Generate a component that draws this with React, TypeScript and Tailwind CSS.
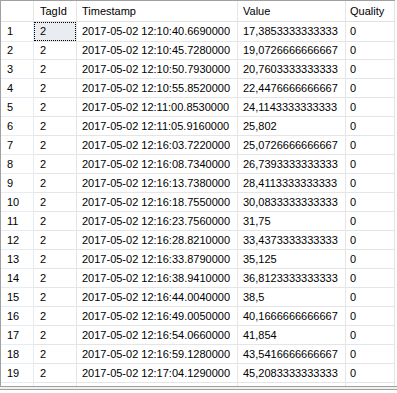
import React from "react";

const rows: [string, string][] = [
  ["12:10:40.6690000", "17,3853333333333"],
  ["12:10:45.7280000", "19,0726666666667"],
  ["12:10:50.7930000", "20,7603333333333"],
  ["12:10:55.8520000", "22,4476666666667"],
  ["12:11:00.8530000", "24,1143333333333"],
  ["12:11:05.9160000", "25,802"],
  ["12:16:03.7220000", "25,0726666666667"],
  ["12:16:08.7340000", "26,7393333333333"],
  ["12:16:13.7380000", "28,4113333333333"],
  ["12:16:18.7550000", "30,0833333333333"],
  ["12:16:23.7560000", "31,75"],
  ["12:16:28.8210000", "33,4373333333333"],
  ["12:16:33.8790000", "35,125"],
  ["12:16:38.9410000", "36,8123333333333"],
  ["12:16:44.0040000", "38,5"],
  ["12:16:49.0050000", "40,1666666666667"],
  ["12:16:54.0660000", "41,854"],
  ["12:16:59.1280000", "43,5416666666667"],
  ["12:17:04.1290000", "45,2083333333333"],
  ["12:17:09.1920000", "46,8753333333333"],
];

const cols = "grid grid-cols-[33px_43px_161px_108px_49px]";

export default function App() {
  return (
    <div
      className="w-[397px] h-[393px] bg-white overflow-hidden text-[11px] text-black"
      style={{ fontFamily: '"Liberation Sans", Arial, sans-serif' }}
    >
      <div className="h-[386px] overflow-hidden border-l border-t border-[#a0a0a0] w-[395px]">
        <div className={`${cols} h-[21px] border-b border-[#e0e0e0]`}>
          <div className="border-r border-[#e5e5e5]" />
          <div className="border-r border-[#e5e5e5] pl-[6px] flex items-center">TagId</div>
          <div className="border-r border-[#e5e5e5] pl-[5px] flex items-center">Timestamp</div>
          <div className="border-r border-[#e5e5e5] pl-[5px] flex items-center">Value</div>
          <div className="border-r border-[#e5e5e5] pl-[4px] flex items-center">Quality</div>
        </div>
        {rows.map(([t, v], i) => (
          <div key={i} className={`${cols} h-[19px]`}>
            <div className="border-r border-b border-[#e6ecf4] pl-[6px] flex items-center">{i + 1}</div>
            {i === 0 ? (
              <div className="border-r border-b border-[#e5e5e5] flex">
                <div className="flex-1 bg-[#e9edf1] border border-dotted border-black pl-[5px] flex items-center">2</div>
              </div>
            ) : (
              <div className="border-r border-b border-[#e5e5e5] pl-[6px] flex items-center">2</div>
            )}
            <div className="border-r border-b border-[#e5e5e5] pl-[5px] flex items-center whitespace-nowrap">
              2017-05-02 {t}
            </div>
            <div className="border-r border-b border-[#e5e5e5] pl-[5px] flex items-center">{v}</div>
            <div className="border-r border-b border-[#e5e5e5] pl-[4px] flex items-center">0</div>
          </div>
        ))}
      </div>
      <div className="h-[1px] bg-[#a0a0a0]" />
      <div className="h-[2px] bg-[#f0f0f0]" />
      <div className="h-[1px] bg-[#a0a0a0]" />
    </div>
  );
}
